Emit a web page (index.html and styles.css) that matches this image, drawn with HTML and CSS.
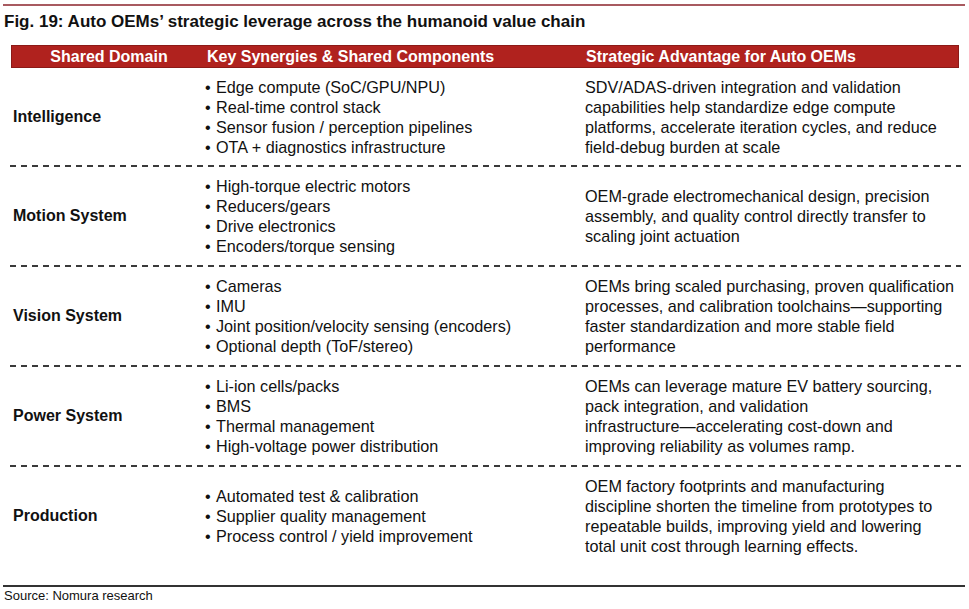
FILE: index.html
```html
<!DOCTYPE html>
<html>
<head>
<meta charset="utf-8">
<link rel="stylesheet" href="styles.css">
</head>
<body>
<div class="page">
  <div class="topline"></div>
  <h1 class="title">Fig. 19: Auto OEMs’ strategic leverage across the humanoid value chain</h1>
  <div class="table">
    <div class="head">
      <div class="hc hc1">Shared Domain</div>
      <div class="hc hc2">Key Synergies &amp; Shared Components</div>
      <div class="hc hc3">Strategic Advantage for Auto OEMs</div>
    </div>
    <div class="row first">
      <div class="label">Intelligence</div>
      <ul class="list">
        <li>Edge compute (SoC/GPU/NPU)</li>
        <li>Real-time control stack</li>
        <li>Sensor fusion / perception pipelines</li>
        <li>OTA + diagnostics infrastructure</li>
      </ul>
      <p class="adv">SDV/ADAS-driven integration and validation<br>capabilities help standardize edge compute<br>platforms, accelerate iteration cycles, and reduce<br>field-debug burden at scale</p>
    </div>
    <div class="sep"></div>
    <div class="row">
      <div class="label">Motion System</div>
      <ul class="list">
        <li>High-torque electric motors</li>
        <li>Reducers/gears</li>
        <li>Drive electronics</li>
        <li>Encoders/torque sensing</li>
      </ul>
      <p class="adv">OEM-grade electromechanical design, precision<br>assembly, and quality control directly transfer to<br>scaling joint actuation</p>
    </div>
    <div class="sep"></div>
    <div class="row">
      <div class="label">Vision System</div>
      <ul class="list">
        <li>Cameras</li>
        <li>IMU</li>
        <li>Joint position/velocity sensing (encoders)</li>
        <li>Optional depth (ToF/stereo)</li>
      </ul>
      <p class="adv">OEMs bring scaled purchasing, proven qualification<br>processes, and calibration toolchains—supporting<br>faster standardization and more stable field<br>performance</p>
    </div>
    <div class="sep"></div>
    <div class="row">
      <div class="label">Power System</div>
      <ul class="list">
        <li>Li-ion cells/packs</li>
        <li>BMS</li>
        <li>Thermal management</li>
        <li>High-voltage power distribution</li>
      </ul>
      <p class="adv">OEMs can leverage mature EV battery sourcing,<br>pack integration, and validation<br>infrastructure—accelerating cost-down and<br>improving reliability as volumes ramp.</p>
    </div>
    <div class="sep"></div>
    <div class="row">
      <div class="label">Production</div>
      <ul class="list">
        <li>Automated test &amp; calibration</li>
        <li>Supplier quality management</li>
        <li>Process control / yield improvement</li>
      </ul>
      <p class="adv">OEM factory footprints and manufacturing<br>discipline shorten the timeline from prototypes to<br>repeatable builds, improving yield and lowering<br>total unit cost through learning effects.</p>
    </div>
  </div>
  <div class="bottomline"></div>
  <div class="source">Source: Nomura research</div>
</div>
</body>
</html>
```

FILE: styles.css
```css
html, body {
  margin: 0;
  padding: 0;
  background: #ffffff;
}
body {
  font-family: "Liberation Sans", Arial, sans-serif;
  color: #111111;
  width: 969px;
  height: 609px;
  overflow: hidden;
}
.page {
  padding: 4px 4px 0 3px;
}
.topline {
  height: 2px;
  background: #a85a60;
}
.title {
  margin: 5px 0 0 1px;
  font-size: 17px;
  font-weight: bold;
  line-height: 22px;
  color: #111;
}
.table {
  margin: 12px 6px 0 8px;
}
.head {
  display: grid;
  grid-template-columns: 194px 380px 1fr;
  height: 23px;
  background: #b0221e;
  border: 1px solid #8c1a17;
  box-sizing: border-box;
  align-items: center;
  color: #ffffff;
  font-weight: bold;
  font-size: 16px;
}
.hc1 { text-align: center; }
.hc2 { padding-left: 1px; }
.hc3 { padding-left: 0; }
.row {
  display: grid;
  grid-template-columns: 194px 380px 1fr;
  align-items: center;
  height: 98px;
  font-size: 16.2px;
  line-height: 20px;
}
.row.first {
  height: 97px;
}
.label {
  font-weight: bold;
  font-size: 16px;
  padding-left: 2px;
}
.list {
  list-style: none;
  margin: 0;
  padding: 0;
}
.list li {
  position: relative;
  padding-left: 11px;
}
.list li::before {
  content: "•";
  position: absolute;
  left: 0;
  top: 0;
}
.adv {
  margin: 0;
}
.sep {
  height: 2px;
  margin: 0 -2px 0 -1px;
  background: repeating-linear-gradient(to right, #3a3a3a 0 6px, transparent 6px 11px);
}
.bottomline {
  margin-top: 20px;
  height: 2px;
  background: #333333;
}
.source {
  margin: 1px 0 0 1px;
  font-size: 13px;
  line-height: 16px;
  color: #111;
}
```
